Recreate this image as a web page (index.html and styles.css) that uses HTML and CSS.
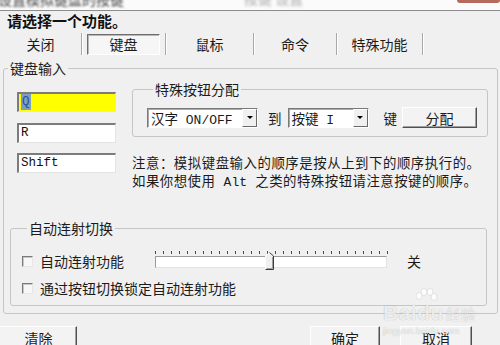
FILE: index.html
```html
<!DOCTYPE html>
<html lang="zh-CN">
<head>
<meta charset="utf-8">
<title>设置模拟键盘的按键</title>
<link rel="stylesheet" href="styles.css">
</head>
<body>
<div class="topbar">
  <span class="topbar-text">设置模拟键盘的按键</span>
  <span class="topbar-mid">按键 设置</span>
  <span class="topbar-close"></span>
</div>
<div class="heading">请选择一个功能。</div>
<div class="tabs">
  <div class="tab t1">关闭</div><div class="sep"></div>
  <div class="tab t2"><span class="tab-box">键盘</span></div><div class="sep"></div>
  <div class="tab t3">鼠标</div><div class="sep"></div>
  <div class="tab t4">命令</div><div class="sep"></div>
  <div class="tab t5">特殊功能</div><div class="sep"></div>
</div>
<fieldset class="group outer">
  <legend>键盘输入</legend>
  <div class="outer-body">
    <div class="keys">
      <div class="field yellow"><span class="sel">Q</span></div>
      <div class="field">R</div>
      <div class="field">Shift</div>
    </div>
    <div class="right">
      <fieldset class="group special">
        <legend>特殊按钮分配</legend>
        <div class="special-row">
          <div class="combo c1"><span class="combo-text">汉字<span class="mono"> ON/OFF</span></span><span class="combo-btn"><span class="arrow"></span></span></div>
          <span class="lbl l1">到</span>
          <div class="combo c2"><span class="combo-text">按键<span class="mono"> I</span></span><span class="combo-btn"><span class="arrow"></span></span></div>
          <span class="lbl l2">键</span>
          <button class="btn assign">分配</button>
        </div>
      </fieldset>
      <div class="note">
        <div class="note-line n1">注意：模拟键盘输入的顺序是按从上到下的顺序执行的。</div>
        <div class="note-line n2">如果你想使用<span class="mono"> Alt </span>之类的特殊按钮请注意按键的顺序。</div>
      </div>
    </div>
  </div>
  <fieldset class="group auto">
    <legend>自动连射切换</legend>
    <div class="auto-row r1">
      <span class="check"></span>
      <span class="check-label w1">自动连射功能</span>
      <div class="slider">
        <div class="ticks"></div>
        <div class="track"></div>
        <svg class="thumb" width="9" height="18" viewBox="0 0 9 18">
          <polygon points="0.5,4 4.5,0.5 8.5,4 8.5,17.5 0.5,17.5" fill="#f0f0f0"/>
          <polyline points="0.5,17 0.5,4 4.5,0.5" fill="none" stroke="#ffffff" stroke-width="1"/>
          <polyline points="4.5,0.5 8.5,4 8.5,17.5 0.5,17.5" fill="none" stroke="#3c3c3c" stroke-width="1"/>
          <polyline points="7.5,5 7.5,16.5 1.5,16.5" fill="none" stroke="#a0a0a0" stroke-width="1"/>
        </svg>
      </div>
      <span class="off">关</span>
    </div>
    <div class="auto-row r2">
      <span class="check"></span>
      <span class="check-label">通过按钮切换锁定自动连射功能</span>
    </div>
  </fieldset>
</fieldset>
<div class="bottom">
  <button class="btn clear">清除</button>
  <button class="btn ok">确定</button>
  <button class="btn cancel">取消</button>
</div>
<div class="watermark">
  <svg class="paw" width="26" height="20" viewBox="0 0 26 20">
    <ellipse cx="6" cy="8" rx="3" ry="3.5" fill="#ffffff" stroke="#d8d8d8" stroke-width="0.8"/>
    <ellipse cx="11" cy="4" rx="3" ry="3.5" fill="#ffffff" stroke="#d8d8d8" stroke-width="0.8"/>
    <ellipse cx="17" cy="4" rx="3" ry="3.5" fill="#ffffff" stroke="#d8d8d8" stroke-width="0.8"/>
    <ellipse cx="21" cy="9" rx="3" ry="3.5" fill="#ffffff" stroke="#d8d8d8" stroke-width="0.8"/>
  </svg>
  <div class="wm-line"><span class="wm-bai">Baidu</span><span class="wm-jy">经验</span></div>
  <div class="wm-url">jingyan.baidu.com</div>
</div>
</body>
</html>
```
FILE: styles.css
```css
* { box-sizing: border-box; }
html, body { margin: 0; padding: 0; }
body {
  width: 500px;
  height: 345px;
  overflow: hidden;
  position: relative;
  background: #f0f0f0;
  color: #1b1b1b;
  font-family: "Noto Sans CJK SC", "Noto Sans", sans-serif;
  font-size: 14px;
}
.mono { font-family: "Liberation Mono", "DejaVu Sans Mono", monospace; font-size: 13px; white-space: pre; }

.topbar {
  height: 11px;
  background: #fbfbfb;
  border-bottom: 1px solid #8c8c8c;
  display: flex;
  overflow: hidden;
}
.topbar-text {
  margin-top: -9px;
  margin-left: -2px;
  font-size: 14px;
  line-height: 16px;
  color: #444;
  filter: blur(1px);
}
.topbar-mid {
  margin-top: -10px;
  margin-left: 120px;
  font-size: 14px;
  line-height: 16px;
  color: #aaa;
  filter: blur(1.4px);
}
.topbar-close {
  margin-left: auto;
  width: 43px;
  height: 3px;
  background: #b56a5c;
  border-radius: 0 0 4px 4px;
}

.heading {
  height: 20px;
  line-height: 20px;
  padding-left: 7px;
  font-size: 15px;
  font-weight: bold;
  color: #111;
}

.tabs {
  margin-top: 1px;
  height: 24px;
  display: flex;
  align-items: center;
}
.tab {
  height: 24px;
  display: flex;
  align-items: center;
  justify-content: center;
  font-size: 14px;
}
.t1 { width: 81px; }
.t2 { width: 83px; justify-content: flex-start; padding-left: 5px; }
.t3 { width: 87px; }
.t4 { width: 82px; }
.t5 { width: 85px; }
.sep {
  width: 1px;
  height: 22px;
  background: #a8a8a8;
  box-shadow: 1px 0 0 #ffffff;
}
.tab-box {
  width: 73px;
  height: 21px;
  display: flex;
  align-items: center;
  justify-content: center;
  background: #f6f6f6;
  border-top: 1px solid #6e6e6e;
  border-left: 1px solid #6e6e6e;
  border-right: 1px solid #ffffff;
  border-bottom: 1px solid #ffffff;
  box-shadow: inset 1px 1px 0 #b8b8b8;
}

.group {
  margin: 0;
  padding: 0;
  min-width: 0;
  border: 1px solid #c6c6c6;
  border-radius: 3px;
}
.group > legend {
  padding: 0 2px;
  margin-left: 4px;
  height: 16px;
  line-height: 16px;
  font-size: 14px;
}
.outer {
  margin: 4px 2px 0 3px;
  padding: 0 0 7px 0;
}
.outer-body {
  display: flex;
  padding-left: 13px;
}
.keys {
  width: 99px;
  padding-top: 16px;
  display: flex;
  flex-direction: column;
}
.field {
  height: 20px;
  background: #ffffff;
  border-top: 2px solid #7c7c7c;
  border-left: 2px solid #7c7c7c;
  border-right: 1px solid #e4e4e4;
  border-bottom: 1px solid #e4e4e4;
  padding-left: 2px;
  font-family: "Liberation Mono", "DejaVu Sans Mono", monospace;
  font-size: 12.5px;
  line-height: 17px;
  color: #111;
}
.field + .field { margin-top: 11px; }
.field + .field + .field { margin-top: 10px; }
.field.yellow { background: #ffff00; }
.sel {
  display: inline-block;
  height: 16px;
  background: #7f9fb8;
  color: #1d4fb0;
  padding: 0 1px;
}

.right {
  width: 356px;
  margin-left: 16px;
}
.special {
  margin-top: 5px;
  width: 356px;
  padding: 10px 0 8px 14px;
}
.special > legend { margin-left: 6px; }
.special-row {
  display: flex;
  align-items: center;
  height: 21px;
}
.combo {
  height: 20px;
  display: flex;
  background: #ffffff;
  border-top: 1px solid #7a7a7a;
  border-left: 1px solid #7a7a7a;
  border-right: 1px solid #ffffff;
  border-bottom: 1px solid #ffffff;
  box-shadow: inset 1px 1px 0 #a8a8a8;
}
.c1 { width: 111px; }
.c2 { width: 81px; }
.combo-text {
  flex: 1;
  padding-left: 3px;
  font-size: 13.5px;
  line-height: 18px;
  white-space: nowrap;
  overflow: hidden;
}
.combo-btn {
  width: 15px;
  height: 18px;
  background: #f0f0f0;
  border-top: 1px solid #ffffff;
  border-left: 1px solid #ffffff;
  border-right: 1px solid #6a6a6a;
  border-bottom: 1px solid #6a6a6a;
  display: flex;
  align-items: center;
  justify-content: center;
}
.arrow {
  width: 0;
  height: 0;
  border-left: 3px solid transparent;
  border-right: 3px solid transparent;
  border-top: 3px solid #000;
}
.lbl { font-size: 13.5px; }
.l1 { margin-left: 10px; margin-right: 6px; }
.l2 { margin-left: 15px; margin-right: 5px; }

.btn {
  font-family: "Noto Sans CJK SC", "Noto Sans", sans-serif;
  font-size: 14px;
  color: #1b1b1b;
  background: #f3f3f3;
  padding: 0;
  border-top: 1px solid #ffffff;
  border-left: 1px solid #ffffff;
  border-right: 1px solid #505050;
  border-bottom: 1px solid #505050;
  box-shadow: inset -1px -1px 0 #a0a0a0;
  border-radius: 0;
  line-height: 18px;
}
.assign { width: 75px; height: 21px; }

.note {
  margin-top: 16px;
  font-size: 13.4px;
  line-height: 18px;
}
.note-line {
  white-space: nowrap;
  text-align: justify;
  text-align-last: justify;
  text-justify: inter-character;
}
.n1 { width: 348px; }
.n2 { width: 345px; }

.auto {
  margin: 28px 10px 0 6px;
  padding: 15px 0 7px 11px;
}
.auto > legend { margin-left: 5px; }
.auto-row {
  height: 20px;
  display: flex;
  align-items: center;
}
.auto-row.r2 { margin-top: 7px; }
.check {
  width: 11px;
  height: 11px;
  background: #f7f7f7;
  border-top: 1px solid #7a7a7a;
  border-left: 1px solid #7a7a7a;
  border-right: 1px solid #e6e6e6;
  border-bottom: 1px solid #e6e6e6;
  box-shadow: inset 1px 1px 0 #c8c8c8;
}
.check-label {
  margin-left: 7px;
  font-size: 14px;
  line-height: 20px;
  white-space: nowrap;
}
.check-label.w1 { width: 115px; }
.slider {
  position: relative;
  width: 232px;
  height: 20px;
}
.ticks {
  width: 233px;
  height: 3px;
  background: repeating-linear-gradient(to right, #4a4a4a 0, #4a4a4a 1px, transparent 1px, transparent 8px);
}
.track {
  margin-top: 2px;
  width: 232px;
  height: 12px;
  background: #ffffff;
  border-top: 1px solid #9a9a9a;
  border-left: 1px solid #9a9a9a;
  border-right: 1px solid #e2e2e2;
  border-bottom: 1px solid #e2e2e2;
}
.thumb {
  position: absolute;
  left: 110px;
  top: 1px;
}
.off {
  margin-left: 20px;
  font-size: 14px;
}

.bottom {
  margin-top: 12px;
  display: flex;
  padding-right: 28px;
}
.bottom .btn { height: 24px; }
.clear { width: 77px; border-left-color: #f3f3f3; }
.ok { width: 70px; margin-left: auto; }
.cancel { width: 72px; margin-left: 20px; }

.watermark {
  position: absolute;
  left: 383px;
  top: 288px;
  width: 95px;
  color: rgba(255, 255, 255, 0.8);
  text-shadow: 0 0 1px rgba(0, 0, 0, 0.3);
  pointer-events: none;
}
.paw {
  display: block;
  margin-left: 30px;
  opacity: 0.85;
}
.wm-line {
  margin-top: -6px;
  display: flex;
  align-items: baseline;
  white-space: nowrap;
}
.wm-bai {
  font-family: "Liberation Sans", Arial, sans-serif;
  font-size: 21px;
  font-weight: bold;
  line-height: 22px;
  letter-spacing: 0.5px;
}
.wm-jy {
  margin-left: 2px;
  font-size: 15px;
  line-height: 18px;
}
.wm-url {
  margin-top: 1px;
  font-family: "Liberation Sans", Arial, sans-serif;
  font-size: 9.5px;
  line-height: 11px;
  color: rgba(255, 255, 255, 0.85);
}
```
